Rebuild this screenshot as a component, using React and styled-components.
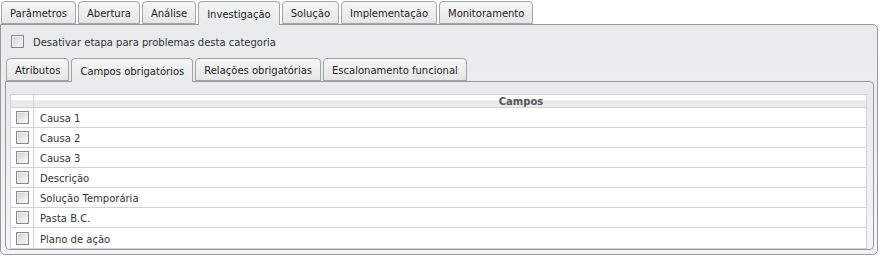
import React from "react";
import styled, { createGlobalStyle } from "styled-components";

const GlobalStyle = createGlobalStyle`
  html, body {
    margin: 0;
    padding: 0;
    background: #ffffff;
  }
  body {
    font-family: "DejaVu Sans", Verdana, sans-serif;
    font-size: 10px;
    color: #333333;
  }
`;

const Page = styled.div`
  width: 878px;
`;

const TabStrip = styled.div`
  display: flex;
  align-items: flex-end;
  gap: 2px;
  height: ${(p) => p.$height}px;
  padding-left: ${(p) => p.$indent}px;
  position: relative;
  z-index: 1;
`;

const Tab = styled.div`
  box-sizing: border-box;
  height: ${(p) => (p.$active ? 24 : 23)}px;
  margin-bottom: ${(p) => (p.$active ? -1 : 0)}px;
  padding: 1px 8px 0;
  line-height: ${(p) => (p.$active ? 23 : 22)}px;
  border: 1px solid #a4a4a4;
  border-bottom: ${(p) => (p.$active ? "none" : "1px solid #a4a4a4")};
  border-radius: 4px 4px 0 0;
  background: ${(p) =>
    p.$active
      ? "linear-gradient(#f4f5f5, #e8eaeb)"
      : "linear-gradient(#f6f6f6, #e6e6e6)"};
  color: #1e1e1e;
  white-space: nowrap;
`;

const Panel = styled.div`
  box-sizing: border-box;
  border: 1px solid #999999;
  border-radius: ${(p) => (p.$outer ? "0 5px 5px 5px" : "0 4px 4px 4px")};
  background: linear-gradient(#e8eaeb, #f4f5f6);
  display: flex;
  flex-direction: column;
`;

const OuterPanel = styled(Panel)`
  height: 231px;
  padding: 0 3px 4px 4px;
`;

const InnerPanel = styled(Panel)`
  height: 169px;
  padding: 12px 6px 1px 4px;
`;

const CheckRow = styled.label`
  display: flex;
  align-items: center;
  gap: 9px;
  height: 32px;
  padding-left: 6px;
  padding-top: 1px;
  box-sizing: border-box;
  color: #333333;
`;

const Label = styled.span`
  padding-top: 2px;
`;

const Box = styled.span`
  box-sizing: border-box;
  width: 13px;
  height: 13px;
  flex: none;
  border: 1px solid #8a8a8a;
  background: linear-gradient(135deg, #cfcfcf 0%, #e8e8e8 55%, #fafafa 100%);
  box-shadow: inset 0 0 0 1px #f0f0f0;
`;

const Table = styled.div`
  border: 1px solid #d2d2d2;
  background: #ffffff;
  display: grid;
  grid-template-columns: 22px 1fr;
`;

const HeadCell = styled.div`
  height: 12px;
  border-bottom: 1px solid #d2d2d2;
  border-left: ${(p) => (p.$first ? "none" : "1px solid #d2d2d2")};
  background: linear-gradient(#ffffff 0%, #ffffff 45%, #ebebeb 46%, #ebebeb 100%);
  font-weight: bold;
  color: #555555;
  line-height: 13px;
  text-align: center;
  padding-left: ${(p) => (p.$first ? 0 : 142)}px;
  overflow: hidden;
`;

const Cell = styled.div`
  box-sizing: border-box;
  height: 20px;
  display: flex;
  align-items: center;
  border-bottom: ${(p) => (p.$last ? "none" : "1px solid #d2d2d2")};
  border-left: ${(p) => (p.$first ? "none" : "1px solid #d2d2d2")};
  padding-left: ${(p) => (p.$first ? 5 : 6)}px;
  padding-top: ${(p) => (p.$first ? 0 : 2)}px;
  color: #333333;
`;

const outerTabs = [
  "Parâmetros",
  "Abertura",
  "Análise",
  "Investigação",
  "Solução",
  "Implementação",
  "Monitoramento",
];

const innerTabs = [
  "Atributos",
  "Campos obrigatórios",
  "Relações obrigatórias",
  "Escalonamento funcional",
];

const fields = [
  "Causa 1",
  "Causa 2",
  "Causa 3",
  "Descrição",
  "Solução Temporária",
  "Pasta B.C.",
  "Plano de ação",
];

export default function App() {
  return (
    <Page>
      <GlobalStyle />
      <TabStrip $height={24} $indent={1}>
        {outerTabs.map((t) => (
          <Tab key={t} $active={t === "Investigação"}>
            {t}
          </Tab>
        ))}
      </TabStrip>
      <OuterPanel $outer>
        <CheckRow>
          <Box />
          <Label>Desativar etapa para problemas desta categoria</Label>
        </CheckRow>
        <TabStrip $height={24} $indent={1}>
          {innerTabs.map((t) => (
            <Tab key={t} $active={t === "Campos obrigatórios"}>
              {t}
            </Tab>
          ))}
        </TabStrip>
        <InnerPanel>
          <Table>
            <HeadCell $first />
            <HeadCell>Campos</HeadCell>
            {fields.map((f, i) => (
              <React.Fragment key={f}>
                <Cell $first $last={i === fields.length - 1}>
                  <Box />
                </Cell>
                <Cell $last={i === fields.length - 1}>{f}</Cell>
              </React.Fragment>
            ))}
          </Table>
        </InnerPanel>
      </OuterPanel>
    </Page>
  );
}
